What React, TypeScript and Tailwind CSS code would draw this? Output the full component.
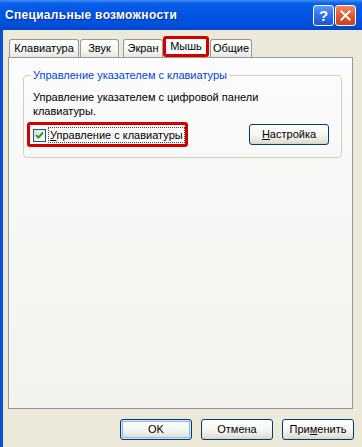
import React from 'react';

const tabBase =
  'h-[18px] border border-b-0 border-[#919b9c] rounded-t-[3px] bg-[linear-gradient(180deg,#ffffff_0%,#f3f3ef_70%,#e6e5de_100%)] text-center text-[11px] leading-[17px] text-black';

const xpButton =
  'h-[21px] rounded-[3px] border border-[#003c74] bg-[linear-gradient(180deg,#ffffff_0%,#f5f5f1_55%,#e2e0d6_90%,#d6d0c5_100%)] text-[11px] leading-[19px] text-black text-center';

export default function App() {
  return (
    <div className="w-[362px] h-[447px] flex flex-col overflow-hidden bg-[#ece9d8] font-['Liberation_Sans',Arial,sans-serif]">
      {/* title bar */}
      <div className="h-[30px] flex items-center justify-between pl-[5px] pr-[6px] bg-[linear-gradient(180deg,#3b8cf5_0%,#0a5ee8_12%,#0054e3_45%,#0050dc_80%,#0046c8_100%)]">
        <span className="text-[12px] font-bold text-white tracking-[0.3px] [text-shadow:1px_1px_0_#0a2f8c]">
          Специальные возможности
        </span>
        <div className="flex gap-[1px]">
          <div className="w-[21px] h-[21px] rounded-[3px] border border-white bg-[linear-gradient(180deg,#5c9af7_0%,#2f6fea_50%,#1f56d6_100%)] flex items-center justify-center text-white text-[15px] font-bold leading-none">
            ?
          </div>
          <div className="w-[21px] h-[21px] rounded-[3px] border border-white bg-[linear-gradient(180deg,#f08866_0%,#e2592f_50%,#c9421b_100%)] flex items-center justify-center">
            <svg width="11" height="11" viewBox="0 0 11 11">
              <path d="M1.5 1.5 L9.5 9.5 M9.5 1.5 L1.5 9.5" stroke="#fff" strokeWidth="2" strokeLinecap="square" />
            </svg>
          </div>
        </div>
      </div>

      <div className="flex flex-1">
        <div className="w-[3px] bg-[#0a4fd8]" />
        <div className="flex-1 flex flex-col pl-[5px] pr-[9px] pt-[6px]">
          {/* tabs */}
          <div className="flex items-end h-[21px]">
            <div className={`${tabBase} ml-[1px] w-[70px]`}>Клавиатура</div>
            <div className={`${tabBase} ml-[1px] w-[39px]`}>Звук</div>
            <div className={`${tabBase} ml-[4px] w-[40px]`}>Экран</div>
            <div className="h-[21px] w-[46px] border-[3px] border-[#d40000] rounded-[3px] bg-white text-center text-[11px] leading-[14px] text-black">
              Мышь
            </div>
            <div className={`${tabBase} ml-[1px] w-[42px]`}>Общие</div>
          </div>

          {/* tab page */}
          <div className="h-[352px] flex flex-col border border-[#919b9c] bg-[linear-gradient(180deg,#fcfcfe_0%,#f7f7f5_40%,#f3f2ed_100%)] pt-[11px]">
            <fieldset className="ml-[14px] mr-[10px] min-w-0 border border-[#d0d0bf] rounded-[4px] p-0">
              <legend className="ml-[7px] px-[2px] text-[11px] leading-[13px] text-[#0046d5]">
                Управление указателем с клавиатуры
              </legend>
              <div className="pt-[8px] pl-[9px] pr-[12px] pb-[10px]">
                <p className="text-[11px] leading-[14px] text-black">
                  Управление указателем с цифровой панели
                  <br />
                  клавиатуры.
                </p>
                <div className="mt-[4px] flex items-center justify-between">
                  <div className="-ml-[6px] h-[25px] w-[161px] border-[3px] border-[#d40000] rounded-[3px] flex items-center pl-[3px]">
                    <div className="w-[13px] h-[13px] mt-[2px] border border-[#1c5180] bg-[linear-gradient(135deg,#dcdcd7_0%,#f4f4f2_60%,#ffffff_100%)] flex items-center justify-center">
                      <svg width="9" height="9" viewBox="0 0 9 9">
                        <path d="M1 4 L3.5 6.5 L8 1.5" fill="none" stroke="#21a121" strokeWidth="2" />
                      </svg>
                    </div>
                    <span className="ml-[2px] mt-[1px] px-[1px] border border-dotted border-[#444] text-[11px] leading-[14px] text-black">
                      <span className="underline">У</span>правление с клавиатуры
                    </span>
                  </div>
                  <button className={`${xpButton} w-[80px]`}>
                    <span className="underline">Н</span>астройка
                  </button>
                </div>
              </div>
            </fieldset>
          </div>

          {/* dialog buttons */}
          <div className="mt-[10px] flex justify-end gap-[9px] -mr-[1px]">
            <button className={`${xpButton} w-[72px] shadow-[inset_0_0_0_1px_#cee7ff,inset_0_0_0_2px_#98b8ea]`}>OK</button>
            <button className={`${xpButton} w-[72px]`}>Отмена</button>
            <button className={`${xpButton} w-[72px]`}>
              При<span className="underline">м</span>енить
            </button>
          </div>
        </div>
      </div>
    </div>
  );
}
